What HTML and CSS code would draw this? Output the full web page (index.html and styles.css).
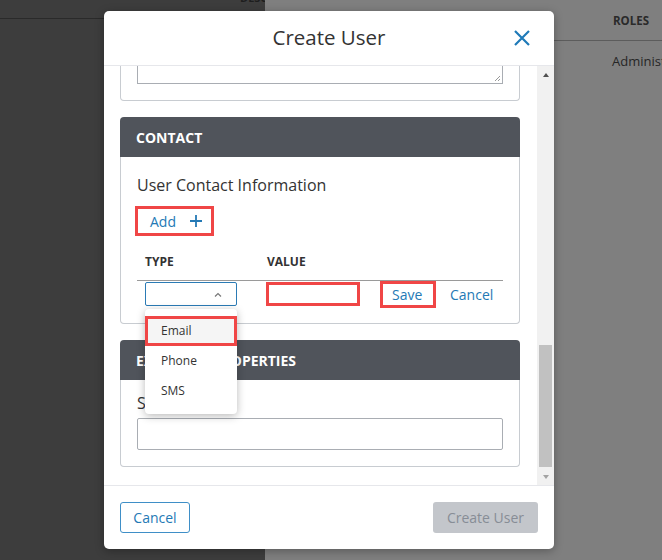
FILE: index.html
```html
<!DOCTYPE html>
<html>
<head>
<meta charset="utf-8">
<link rel="stylesheet" href="styles.css">
</head>
<body>
<div class="page">
  <div class="side">
    <div class="side-head"><span class="side-label">DESCRIPTION</span></div>
  </div>
  <div class="main">
    <div class="main-head"><span class="th">ROLES</span></div>
    <div class="main-row"><span class="td">Administrator</span></div>
  </div>
</div>

<div class="modal">
  <div class="modal-header">
    <h1 class="modal-title">Create User</h1>
    <button class="close" aria-label="Close">
      <svg width="16" height="16" viewBox="0 0 16 16"><path d="M1 1 L15 15 M15 1 L1 15" stroke="#1f7ab8" stroke-width="2.2" fill="none"/></svg>
    </button>
  </div>
  <div class="modal-body">
    <div class="scroll-content">
      <div class="card card-prev">
        <div class="textarea">
          <svg class="grip" width="7" height="7" viewBox="0 0 7 7"><path d="M6 1 L1 6 M6 4 L4 6" stroke="#999" stroke-width="1" fill="none"/></svg>
        </div>
      </div>

      <div class="card">
        <div class="card-head">CONTACT</div>
        <div class="card-body contact-body">
          <div class="section-title">User Contact Information</div>
          <button class="add-btn">Add
            <svg width="12" height="12" viewBox="0 0 12 12"><path d="M6 0 V12 M0 6 H12" stroke="#2479b5" stroke-width="1.8" fill="none"/></svg>
          </button>
          <div class="tbl-head">
            <span>TYPE</span><span>VALUE</span>
          </div>
          <div class="tbl-row">
            <div class="select-cell">
              <div class="select">
                <svg width="8" height="5" viewBox="0 0 8 5"><path d="M1 4.5 L4 1.5 L7 4.5" stroke="#777" stroke-width="1.2" fill="none"/></svg>
              </div>
              <ul class="dropdown">
                <li class="opt active">Email</li>
                <li class="opt">Phone</li>
                <li class="opt">SMS</li>
              </ul>
            </div>
            <div class="value-box"></div>
            <button class="link save">Save</button>
            <button class="link cancel-link">Cancel</button>
          </div>
        </div>
      </div>

      <div class="card">
        <div class="card-head">EXTENDED PROPERTIES</div>
        <div class="card-body ext-body">
          <div class="field-label">Sid</div>
          <div class="input"></div>
        </div>
      </div>
    </div>
    <div class="scrollbar">
      <div class="sb-btn"><span class="tri-up"></span></div>
      <div class="sb-track"><div class="sb-thumb"></div></div>
      <div class="sb-btn"><span class="tri-down"></span></div>
    </div>
  </div>
  <div class="modal-footer">
    <button class="btn btn-outline">Cancel</button>
    <button class="btn btn-disabled">Create User</button>
  </div>
</div>
</body>
</html>
```

FILE: styles.css
```css
* { box-sizing: border-box; }
html, body { margin: 0; padding: 0; }
body {
  width: 662px;
  height: 560px;
  overflow: hidden;
  font-family: "Open Sans", "Noto Sans", "Liberation Sans", sans-serif;
  color: #333;
  position: relative;
}
button { font-family: inherit; background: none; border: none; padding: 0; cursor: pointer; }

.page {
  display: grid;
  grid-template-columns: 265px 1fr;
  height: 560px;
}
.side { background: #3d3d3d; }
.side-head {
  height: 19px;
  border-bottom: 1px solid #2a2a2a;
  overflow: hidden;
  padding-left: 240px;
}
.side-label {
  display: block;
  margin-top: -10px;
  font-size: 11px;
  font-weight: 700;
  color: #1e1e1e;
  white-space: nowrap;
  line-height: 15px;
}
.main { background: #7f7f7f; }
.main-head {
  height: 41px;
  border-bottom: 1px solid #5c5c5c;
  padding-left: 348px;
  display: flex;
  align-items: center;
}
.th { font-size: 11.5px; font-weight: 700; color: #2a2a2a; }
.main-row {
  padding-left: 347px;
  padding-top: 11px;
  font-size: 13px;
  line-height: 18px;
  color: #262626;
  white-space: nowrap;
}

.modal {
  position: absolute;
  left: 104px;
  top: 11px;
  width: 450px;
  height: 538px;
  background: #fff;
  border-radius: 5px;
  box-shadow: 0 2px 10px rgba(0,0,0,.3);
  display: flex;
  flex-direction: column;
  overflow: hidden;
}
.modal-header {
  height: 55px;
  flex: none;
  border-bottom: 1px solid #e6e7eb;
  display: flex;
  align-items: center;
  justify-content: center;
  position: relative;
}
.modal-title {
  margin: 0;
  font-size: 20.5px;
  font-weight: 400;
  color: #333;
  line-height: 26px;
  margin-top: -2px;
}
.close {
  position: absolute;
  right: 24px;
  top: 19px;
  width: 16px;
  height: 16px;
  display: flex;
}

.modal-body {
  flex: 1;
  display: flex;
  min-height: 0;
}
.scroll-content {
  flex: 1;
  overflow: hidden;
  padding: 0 17px 0 16px;
}

.card {
  border-radius: 4px;
  margin-bottom: 16px;
}
.card-prev {
  border: 1px solid #c8ccd1;
  border-top: none;
  border-radius: 0 0 4px 4px;
  padding: 0 16px 16px;
}
.textarea {
  height: 18px;
  border: 1px solid #a9adb3;
  border-top: none;
  position: relative;
}
.grip { position: absolute; right: 1px; bottom: 1px; }

.card-head {
  height: 40px;
  background: #50545b;
  color: #fff;
  font-size: 14px;
  font-weight: 700;
  padding-left: 16px;
  display: flex;
  align-items: center;
  border-radius: 4px 4px 0 0;
}
.card-body {
  border: 1px solid #c8ccd1;
  border-top: none;
  border-radius: 0 0 4px 4px;
  padding: 0 16px 16px;
}
.contact-body { padding-top: 17px; }
.section-title {
  font-size: 16px;
  line-height: 22px;
  color: #333;
}
.add-btn {
  margin: 10px 0 0 -2px;
  width: 79px;
  height: 30px;
  border: 3px solid #f04646;
  display: flex;
  align-items: center;
  gap: 14px;
  padding-left: 12px;
  font-size: 14px;
  color: #2479b5;
}
.tbl-head {
  height: 45px;
  border-bottom: 1px solid #9a9a9a;
  display: grid;
  grid-template-columns: 122px 1fr;
  align-items: end;
  padding: 0 0 11px 8px;
  font-size: 12px;
  line-height: 15px;
  font-weight: 700;
  color: #333;
}
.tbl-row {
  display: flex;
  align-items: center;
  padding-left: 8px;
  height: 26px;
}
.select-cell {
  position: relative;
  width: 121px;
  flex: none;
}
.select {
  width: 92px;
  height: 24px;
  border: 1px solid #2b7bb5;
  border-radius: 2px;
  display: flex;
  align-items: center;
  justify-content: flex-end;
  padding-right: 14px;
}
.dropdown {
  position: absolute;
  left: 0;
  top: 27px;
  width: 92px;
  margin: 0;
  padding: 7px 0 8px;
  list-style: none;
  background: #fff;
  border-radius: 4px;
  box-shadow: 0 2px 8px rgba(0,0,0,.28);
  z-index: 5;
}
.opt {
  height: 30px;
  padding-left: 16px;
  font-size: 12px;
  line-height: 30px;
  color: #333;
}
.opt.active {
  background: #f5f5f5;
  border: 3px solid #f04646;
  padding-left: 13px;
  line-height: 24px;
}
.value-box {
  width: 94px;
  height: 24px;
  border: 3px solid #f04646;
  flex: none;
}
.link {
  font-size: 14px;
  color: #2479b5;
}
.save {
  margin-left: 20px;
  width: 56px;
  height: 27px;
  border: 3px solid #f04646;
  padding-left: 9px;
  text-align: left;
}
.cancel-link { margin-left: 14px; }

.ext-body { padding-top: 12px; }
.field-label {
  font-size: 16px;
  line-height: 22px;
  color: #333;
}
.input {
  margin-top: 4px;
  height: 32px;
  border: 1px solid #a9adb3;
  border-radius: 2px;
}

.scrollbar {
  width: 17px;
  flex: none;
  background: #f1f1f1;
  display: flex;
  flex-direction: column;
}
.sb-btn {
  height: 17px;
  display: flex;
  align-items: center;
  justify-content: center;
  flex: none;
}
.tri-up {
  width: 0; height: 0;
  border-left: 3.5px solid transparent;
  border-right: 3.5px solid transparent;
  border-bottom: 4px solid #505050;
}
.tri-down {
  width: 0; height: 0;
  border-left: 3.5px solid transparent;
  border-right: 3.5px solid transparent;
  border-top: 4px solid #a3a3a3;
}
.sb-track { flex: 1; padding: 0 2px; }
.sb-thumb {
  margin-top: 262px;
  height: 122px;
  background: #c1c1c1;
}

.modal-footer {
  height: 64px;
  flex: none;
  border-top: 1px solid #e6e7eb;
  display: flex;
  justify-content: space-between;
  align-items: flex-start;
  padding: 16px 16px 0;
}
.btn {
  height: 31px;
  border-radius: 3px;
  font-size: 14px;
}
.btn-outline {
  width: 70px;
  border: 1px solid #3f8fc7;
  color: #2479b5;
}
.btn-disabled {
  width: 105px;
  background: #c3c6cb;
  color: #878d96;
}
```
